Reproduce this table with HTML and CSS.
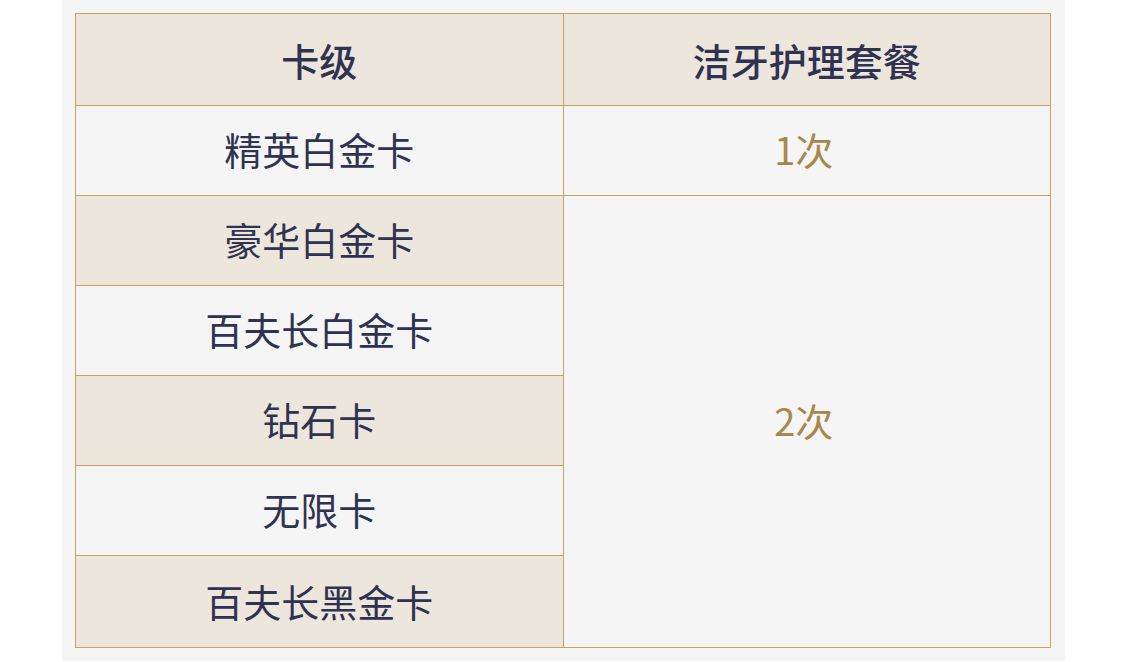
FILE: index.html
```html
<!DOCTYPE html>
<html lang="zh-CN">
<head>
<meta charset="utf-8">
<link rel="stylesheet" href="styles.css">
</head>
<body>
<div class="panel">
  <table class="grid">
    <thead>
      <tr class="head">
        <th>卡级</th>
        <th>洁牙护理套餐</th>
      </tr>
    </thead>
    <tbody>
      <tr class="light">
        <td class="name">精英白金卡</td>
        <td class="val">1次</td>
      </tr>
      <tr class="tan">
        <td class="name">豪华白金卡</td>
        <td class="val merged" rowspan="5">2次</td>
      </tr>
      <tr class="light">
        <td class="name">百夫长白金卡</td>
      </tr>
      <tr class="tan">
        <td class="name">钻石卡</td>
      </tr>
      <tr class="light">
        <td class="name">无限卡</td>
      </tr>
      <tr class="tan last">
        <td class="name">百夫长黑金卡</td>
      </tr>
    </tbody>
  </table>
</div>
</body>
</html>
```

FILE: styles.css
```css
html, body {
  margin: 0;
  padding: 0;
  background: #ffffff;
}

.panel {
  margin-left: 62px;
  width: 1003px;
  height: 661px;
  box-sizing: border-box;
  padding: 13px 14px 0 13px;
  background: #f5f5f5;
}

.grid {
  width: 976px;
  border-collapse: collapse;
  table-layout: fixed;
  font-family: "Noto Sans CJK SC", "Noto Sans", sans-serif;
  font-size: 38px;
  color: #2f3351;
}

.grid th,
.grid td {
  border: 1px solid #c9a35a;
  text-align: center;
  vertical-align: middle;
  padding: 0;
}

.grid th {
  width: 50%;
  height: 91px;
  font-weight: 500;
  background: #ede6dd;
}

.grid td {
  height: 84px;
  padding-bottom: 5px;
  font-weight: 400;
}

.grid .last td {
  height: 89px;
  padding-bottom: 2px;
}

.light td {
  background: #f5f5f5;
}

.tan td {
  background: #ede6dd;
}

.grid td.val {
  color: #a8874b;
  background: #f5f5f5;
  padding-right: 6px;
}
```
